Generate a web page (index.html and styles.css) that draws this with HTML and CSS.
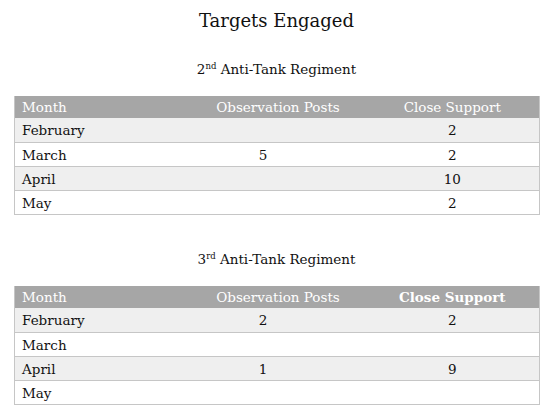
FILE: index.html
```html
<!DOCTYPE html>
<html>
<head>
<meta charset="utf-8">
<link rel="stylesheet" href="styles.css">
</head>
<body>
<h1 class="title">Targets Engaged</h1>
<section class="block">
  <h2 class="subtitle">2<sup>nd</sup> Anti-Tank Regiment</h2>
  <table class="grid">
    <colgroup><col class="w-month"><col class="w-obs"><col class="w-close"></colgroup>
    <thead>
      <tr><th class="c-month">Month</th><th class="c-obs">Observation Posts</th><th class="c-close">Close Support</th></tr>
    </thead>
    <tbody>
      <tr><td>February</td><td class="num"></td><td class="num">2</td></tr>
      <tr><td>March</td><td class="num">5</td><td class="num">2</td></tr>
      <tr><td>April</td><td class="num"></td><td class="num">10</td></tr>
      <tr><td>May</td><td class="num"></td><td class="num">2</td></tr>
    </tbody>
  </table>
</section>
<section class="block second">
  <h2 class="subtitle">3<sup>rd</sup> Anti-Tank Regiment</h2>
  <table class="grid">
    <colgroup><col class="w-month"><col class="w-obs"><col class="w-close"></colgroup>
    <thead>
      <tr><th class="c-month">Month</th><th class="c-obs">Observation Posts</th><th class="c-close strong">Close Support</th></tr>
    </thead>
    <tbody>
      <tr><td>February</td><td class="num">2</td><td class="num">2</td></tr>
      <tr><td>March</td><td class="num"></td><td class="num"></td></tr>
      <tr><td>April</td><td class="num">1</td><td class="num">9</td></tr>
      <tr><td>May</td><td class="num"></td><td class="num"></td></tr>
    </tbody>
  </table>
</section>
</body>
</html>
```
FILE: styles.css
```css
html, body { background: #fff; }
body {
  margin: 0;
  padding: 9px 14px 0 14px;
  font-family: "DejaVu Serif", "Liberation Serif", serif;
  color: #111;
}
.title {
  margin: 0;
  text-align: center;
  font-weight: normal;
  font-size: 18px;
  line-height: 24px;
}
.subtitle {
  margin: 0;
  text-align: center;
  font-weight: normal;
  font-size: 13.5px;
  line-height: 20px;
  padding: 26px 0 17px;
}
.subtitle sup {
  font-size: 8.5px;
  vertical-align: 5px;
  line-height: 0;
}
.second { margin-top: 8px; }
.grid {
  width: 525px;
  border-collapse: collapse;
  table-layout: fixed;
  font-size: 13.5px;
  border: 1px solid #c6c6c6;
  border-top: none;
}
.w-month { width: 146px; }
.w-obs { width: 205px; }
.w-close { width: 174px; }
.grid th {
  background: #a6a6a6;
  color: #fff;
  font-weight: normal;
  height: 22px;
  padding: 0 7px;
  text-align: center;
}
.grid th.c-month { text-align: left; }
.grid th.c-obs { padding-left: 37px; }
.grid th.strong { font-weight: bold; }
.grid td {
  height: 23px;
  padding: 0 7px;
  border-top: 1px solid #c6c6c6;
}
.grid tbody tr:nth-child(odd) td { background: #efefef; }
.grid tbody tr:first-child td { border-top: none; height: 24px; }
.grid td.num { text-align: center; }
```
